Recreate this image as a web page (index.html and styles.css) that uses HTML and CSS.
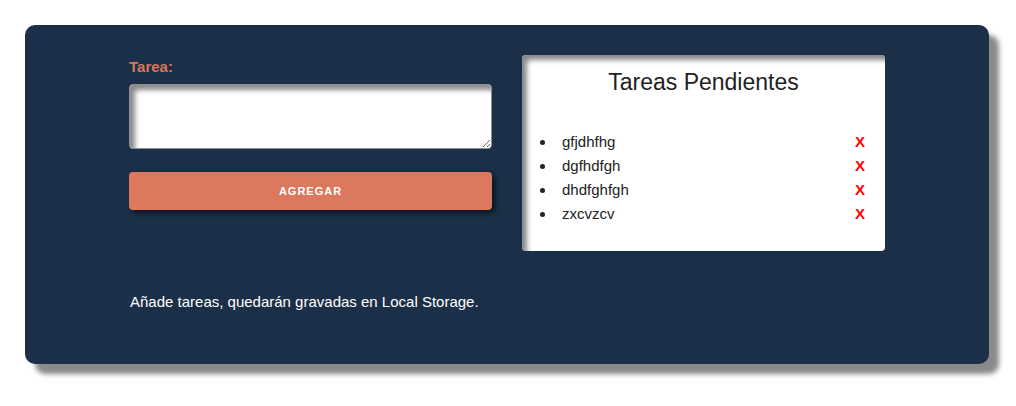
FILE: index.html
```html
<!DOCTYPE html>
<html lang="es">
<head>
<meta charset="utf-8">
<title>Tareas</title>
<link rel="stylesheet" href="styles.css">
</head>
<body>
<div class="container">
  <div class="columns">
    <form class="form-col">
      <label class="label" for="tarea">Tarea:</label>
      <textarea id="tarea" class="textarea"></textarea>
      <button type="button" class="btn">AGREGAR</button>
    </form>
    <div class="card">
      <h2 class="card-title">Tareas Pendientes</h2>
      <ul class="list">
        <li><span>gfjdhfhg</span><a class="del">X</a></li>
        <li><span>dgfhdfgh</span><a class="del">X</a></li>
        <li><span>dhdfghfgh</span><a class="del">X</a></li>
        <li><span>zxcvzcv</span><a class="del">X</a></li>
      </ul>
    </div>
  </div>
  <p class="note">Añade tareas, quedarán gravadas en Local Storage.</p>
</div>
</body>
</html>
```

FILE: styles.css
```css
* { box-sizing: border-box; }
html { background: #ffffff; }
body {
  margin: 0;
  padding: 25px 27px 42px 25px;
  min-height: 406px;
  background: #ffffff;
  font-family: "Liberation Sans", Arial, sans-serif;
}
.container {
  width: 964px;
  height: 339px;
  background: #1b2f48;
  border-radius: 10px;
  padding: 30px 0 0 104px;
  box-shadow: 10px 10px 5px #8a8a8a;
}
.columns {
  display: flex;
  gap: 30px;
  align-items: flex-start;
}
.form-col {
  width: 363px;
  display: flex;
  flex-direction: column;
  margin: 0;
  padding-top: 3px;
}
.label {
  color: #d9775b;
  font-weight: bold;
  font-size: 15px;
  line-height: 17px;
  margin-bottom: 9px;
}
.textarea {
  width: 363px;
  height: 65px;
  border: 1px solid #8a8f96;
  border-radius: 4px;
  box-shadow: inset 5px 5px 5px #8a8a8a;
  background: #fff;
  resize: vertical;
  margin: 0;
}
.btn {
  margin-top: 23px;
  width: 363px;
  height: 38px;
  border: none;
  border-radius: 4px;
  background: #db785d;
  color: #ffffff;
  font-family: "Liberation Sans", Arial, sans-serif;
  font-weight: bold;
  font-size: 11px;
  letter-spacing: 1px;
  box-shadow: 3px 3px 5px #0b1420;
}
.card {
  width: 363px;
  height: 196px;
  background: #ffffff;
  border-radius: 4px;
  box-shadow: inset 5px 5px 5px #8a8a8a;
  padding: 14px 20px 0 0;
}
.card-title {
  margin: 0;
  text-align: center;
  font-weight: normal;
  font-size: 23px;
  line-height: 26px;
  color: #222;
  padding-left: 20px;
}
.list {
  margin: 35px 0 0 0;
  padding-left: 34px;
  color: #222;
  font-size: 15px;
  line-height: 24px;
}
.list li { padding-left: 6px; }
.list li span { display: inline-block; }
.del {
  float: right;
  color: #ff0000;
  font-weight: bold;
  font-size: 15px;
}
.note {
  margin: 42px 0 0 1px;
  color: #ffffff;
  font-size: 15px;
  line-height: 18px;
}
```
